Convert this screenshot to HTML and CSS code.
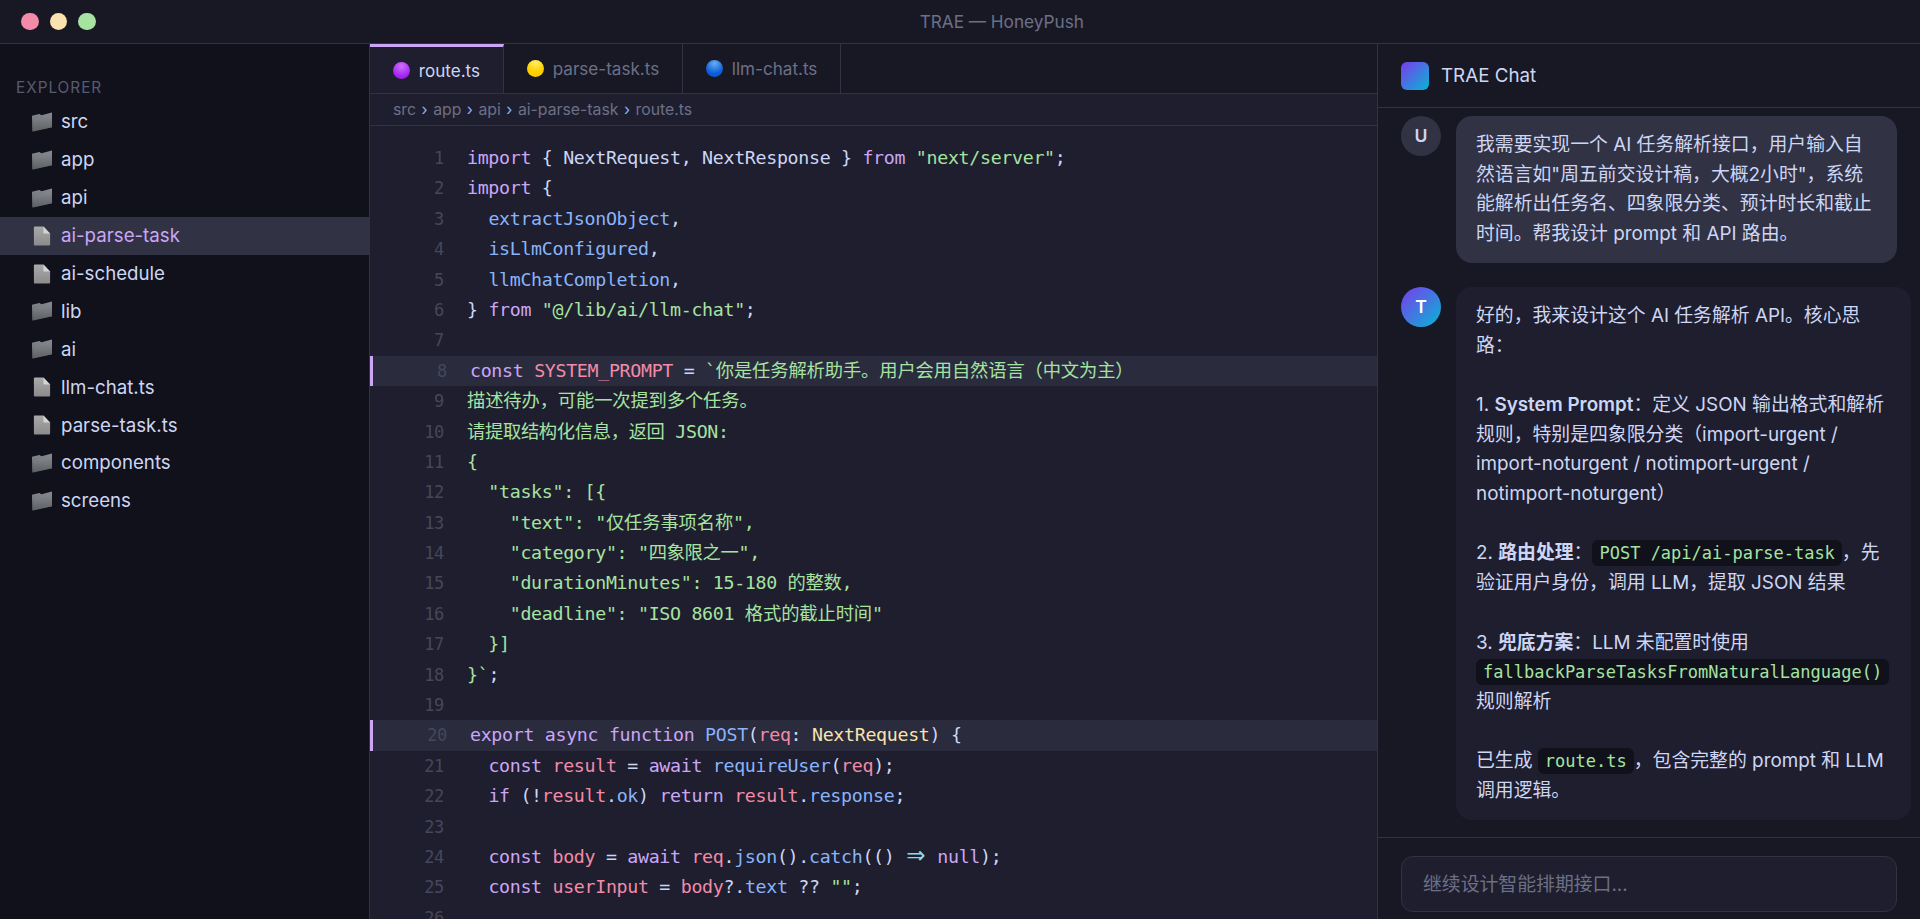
FILE: index.html
```html
<!DOCTYPE html>
<html lang="en">
<head>
    <meta charset="UTF-8">
    <title>TRAE — HoneyPush</title>
    <link rel="stylesheet" href="styles.css">
</head>
<body>
    <svg class="defs" width="0" height="0">
        <defs>
            <linearGradient id="folderBack" x1="0" y1="0" x2="0" y2="1">
                <stop offset="0" stop-color="#8a8d92"/>
                <stop offset="1" stop-color="#4a4c50"/>
            </linearGradient>
            <linearGradient id="folderFront" x1="0" y1="0" x2="0" y2="1">
                <stop offset="0" stop-color="#85888c"/>
                <stop offset="1" stop-color="#5c5f63"/>
            </linearGradient>
            <linearGradient id="filePage" x1="0" y1="0" x2="0" y2="1">
                <stop offset="0" stop-color="#a9a9a9"/>
                <stop offset="1" stop-color="#8b8b8b"/>
            </linearGradient>
            <symbol id="folder" viewBox="0 0 19 19">
                <path d="M0 3.5 L7 2 L9 3 L19 .5 V14.500 L0 18.500 Z" fill="url(#folderBack)"/>
                <path d="M1.500 6.500 L19 3 V14.500 L1 18.500 Z" fill="url(#folderFront)"/>
            </symbol>
            <symbol id="file" viewBox="0 0 19 21">
                <path d="M1 1.500 Q1 .5 2 .5 H11 L18 8 V19.500 Q18 20.500 17 20.500 H2 Q1 20.500 1 19.500 Z" fill="url(#filePage)"/>
                <path d="M11 .5 L18 8 H12 Q11 8 11 7 Z" fill="#d4d4d4"/>
            </symbol>
        </defs>
    </svg>

    <header class="titlebar">
        <div class="lights">
            <span class="light red"></span>
            <span class="light yellow"></span>
            <span class="light green"></span>
        </div>
        <div class="title">TRAE — HoneyPush</div>
    </header>

    <div class="workspace">
        <aside class="sidebar">
            <div class="sidebarTitle">EXPLORER</div>
            <div class="treeItem"><svg class="treeIcon"><use href="#folder"/></svg>src</div>
            <div class="treeItem"><svg class="treeIcon"><use href="#folder"/></svg>app</div>
            <div class="treeItem"><svg class="treeIcon"><use href="#folder"/></svg>api</div>
            <div class="treeItem active"><svg class="treeIcon"><use href="#file"/></svg>ai-parse-task</div>
            <div class="treeItem"><svg class="treeIcon"><use href="#file"/></svg>ai-schedule</div>
            <div class="treeItem"><svg class="treeIcon"><use href="#folder"/></svg>lib</div>
            <div class="treeItem"><svg class="treeIcon"><use href="#folder"/></svg>ai</div>
            <div class="treeItem"><svg class="treeIcon"><use href="#file"/></svg>llm-chat.ts</div>
            <div class="treeItem"><svg class="treeIcon"><use href="#file"/></svg>parse-task.ts</div>
            <div class="treeItem"><svg class="treeIcon"><use href="#folder"/></svg>components</div>
            <div class="treeItem"><svg class="treeIcon"><use href="#folder"/></svg>screens</div>
        </aside>

        <main class="editor">
            <div class="tabs">
                <div class="tab active"><span class="ball purple"></span>route.ts</div>
                <div class="tab"><span class="ball gold"></span>parse-task.ts</div>
                <div class="tab"><span class="ball blue"></span>llm-chat.ts</div>
            </div>
            <div class="crumbs">src<i>›</i>app<i>›</i>api<i>›</i>ai-parse-task<i>›</i>route.ts</div>
            <div class="code">
                <div class="line"><span class="num">1</span><span class="k">import</span> { NextRequest, NextResponse } <span class="k">from</span> <span class="s">"next/server"</span>;</div>
                <div class="line"><span class="num">2</span><span class="k">import</span> {</div>
                <div class="line"><span class="num">3</span>  <span class="f">extractJsonObject</span>,</div>
                <div class="line"><span class="num">4</span>  <span class="f">isLlmConfigured</span>,</div>
                <div class="line"><span class="num">5</span>  <span class="f">llmChatCompletion</span>,</div>
                <div class="line"><span class="num">6</span>} <span class="k">from</span> <span class="s">"@/lib/ai/llm-chat"</span>;</div>
                <div class="line"><span class="num">7</span></div>
                <div class="line hl"><span class="num">8</span><span class="k">const</span> <span class="v">SYSTEM_PROMPT</span> = <span class="s">`<span class="zh">你是任务解析助手。用户会用自然语言（中文为主）</span></span></div>
                <div class="line"><span class="num">9</span><span class="s zh">描述待办，可能一次提到多个任务。</span></div>
                <div class="line"><span class="num">10</span><span class="s">请提取结构化信息，返回 JSON:</span></div>
                <div class="line"><span class="num">11</span><span class="s">{</span></div>
                <div class="line"><span class="num">12</span><span class="s">  "tasks": [{</span></div>
                <div class="line"><span class="num">13</span><span class="s">    "text": "<span class="zh">仅任务事项名称</span>",</span></div>
                <div class="line"><span class="num">14</span><span class="s">    "category": "四象限之一",</span></div>
                <div class="line"><span class="num">15</span><span class="s">    "durationMinutes": 15-180 的整数,</span></div>
                <div class="line"><span class="num">16</span><span class="s">    "deadline": "ISO 8601 <span class="zh">格式的截止时间</span>"</span></div>
                <div class="line"><span class="num">17</span><span class="s">  }]</span></div>
                <div class="line"><span class="num">18</span><span class="s">}`</span>;</div>
                <div class="line"><span class="num">19</span></div>
                <div class="line hl"><span class="num">20</span><span class="k">export async function</span> <span class="f">POST</span>(<span class="v">req</span>: <span class="t">NextRequest</span>) {</div>
                <div class="line"><span class="num">21</span>  <span class="k">const</span> <span class="v">result</span> = <span class="k">await</span> <span class="f">requireUser</span>(<span class="v">req</span>);</div>
                <div class="line"><span class="num">22</span>  <span class="k">if</span> (!<span class="v">result</span>.<span class="f">ok</span>) <span class="k">return</span> <span class="v">result</span>.<span class="f">response</span>;</div>
                <div class="line"><span class="num">23</span></div>
                <div class="line"><span class="num">24</span>  <span class="k">const</span> <span class="v">body</span> = <span class="k">await</span> <span class="v">req</span>.<span class="f">json</span>().<span class="f">catch</span>(() <span class="arrow">⇒</span> <span class="k">null</span>);</div>
                <div class="line"><span class="num">25</span>  <span class="k">const</span> <span class="v">userInput</span> = <span class="v">body</span>?.<span class="f">text</span> ?? <span class="s">""</span>;</div>
                <div class="line"><span class="num">26</span></div>
            </div>
        </main>

        <section class="chat">
            <div class="chatHead"><span class="chatLogo"></span>TRAE Chat</div>
            <div class="messages">
                <div class="msg">
                    <div class="avatar">U</div>
                    <div class="bubble user">我需要实现一个 AI 任务解析接口，用户输入自然语言如"周五前交设计稿，大概2小时"，系统能解析出任务名、四象限分类、预计时长和截止时间。帮我设计 prompt 和 API 路由。</div>
                </div>
                <div class="msg">
                    <div class="avatar bot">T</div>
                    <div class="bubble">好的，我来设计这个 AI 任务解析 API。核心思路：<br><br>1. <b>System Prompt</b>：定义 JSON 输出格式和解析规则，特别是四象限分类（import-urgent / import-noturgent / notimport-urgent / notimport-noturgent）<br><br>2. <b>路由处理</b>：<code>POST /api/ai-parse-task</code>，先验证用户身份，调用 LLM，提取 JSON 结果<br><br>3. <b>兜底方案</b>：LLM 未配置时使用 <code>fallbackParseTasksFromNaturalLanguage()</code> 规则解析<br><br>已生成 <code>route.ts</code>，包含完整的 prompt 和 LLM 调用逻辑。</div>
                </div>
            </div>
            <div class="chatFoot">
                <input class="chatInput" type="text" placeholder="继续设计智能排期接口...">
            </div>
        </section>
    </div>
</body>
</html>
```
FILE: styles.css
```css
*{
    margin: 0;
    padding: 0;
    box-sizing: border-box;
}
html, body{
    height: 100%;
}
body{
    display: flex;
    flex-direction: column;
    overflow: hidden;
    background: #1e1e2e;
    color: #cdd6f4;
    font-family: Inter, "Noto Sans CJK SC", sans-serif;
}
.defs{
    position: absolute;
}

/* title bar */
.titlebar{
    display: flex;
    align-items: center;
    flex: none;
    height: 44px;
    padding: 0 12px 0 21px;
    background: #181825;
    border-bottom: 1px solid #313244;
}
.lights{
    display: flex;
    gap: 11px;
}
.light{
    width: 17.5px;
    height: 17.5px;
    border-radius: 50%;
}
.red{ background: #f38ba8; }
.yellow{ background: #f9e2af; }
.green{ background: #a6e3a1; }
.title{
    flex: 1;
    text-align: center;
    font-size: 17.2px;
    color: #6c7086;
}

.workspace{
    display: flex;
    flex: 1;
    min-height: 0;
}

/* explorer */
.sidebar{
    flex: none;
    width: 370px;
    padding-top: 34px;
    background: #11111b;
    border-right: 1px solid #313244;
}
.sidebarTitle{
    height: 20px;
    margin-bottom: 5px;
    padding-left: 16px;
    font-size: 15.3px;
    line-height: 20px;
    letter-spacing: 1px;
    color: #585b70;
}
.treeItem{
    display: flex;
    align-items: center;
    gap: 9px;
    height: 37.9px;
    padding-left: 32px;
    font-size: 18.7px;
}
.treeItem.active{
    background: #313244;
    color: #cba6f7;
}
.treeIcon{
    width: 20px;
    height: 20px;
    flex: none;
}

/* editor */
.editor{
    display: flex;
    flex-direction: column;
    flex: 1;
    min-width: 0;
}
.tabs{
    display: flex;
    flex: none;
    height: 50px;
    background: #181825;
    border-bottom: 1px solid #313244;
}
.tab{
    display: flex;
    align-items: center;
    gap: 9px;
    padding: 0 22.8px;
    font-size: 17.1px;
    color: #6c7086;
    border-right: 1px solid #313244;
}
.tab.active{
    background: #1e1e2e;
    color: #cdd6f4;
    border-top: 3px solid #cba6f7;
}
.ball{
    width: 17px;
    height: 17px;
    border-radius: 50%;
}
.purple{ background: radial-gradient(circle at 50% 25%, #d070ff, #a020f0 70%); }
.gold{ background: radial-gradient(circle at 50% 15%, #fff06a, #ffcf00 55%); }
.blue{ background: radial-gradient(circle at 50% 20%, #62aef5, #0b5ad8 65%); }
.crumbs{
    flex: none;
    height: 32px;
    padding-left: 23px;
    font-size: 15.8px;
    line-height: 31px;
    color: #6c7086;
    border-bottom: 1px solid #313244;
}
.crumbs i{
    margin: 0 5.5px;
    font-style: normal;
    color: #89b4fa;
}
.code{
    flex: 1;
    min-height: 0;
    overflow: hidden;
    padding-top: 17px;
    font-family: "DejaVu Sans Mono", "Noto Sans CJK SC", monospace;
    font-size: 18.3px;
    letter-spacing: -0.32px;
    line-height: 30.4px;
}
.line{
    height: 30.4px;
    white-space: pre;
}
.line.hl{
    background: #2a2b3d;
    border-left: 3px solid #cba6f7;
}
.num{
    display: inline-block;
    width: 74px;
    margin-right: 23px;
    text-align: right;
    font-size: 17px;
    letter-spacing: -0.3px;
    color: #45475a;
}
.k{ color: #cba6f7; }
.s{ color: #a6e3a1; }
.f{ color: #89b4fa; }
.v{ color: #f38ba8; }
.t{ color: #f9e2af; }
.zh{
    letter-spacing: -0.12px;
}
.arrow{
    display: inline-block;
    width: 21.4px;
    text-align: center;
    font-family: "DejaVu Sans", sans-serif;
    font-size: 23px;
    line-height: 0;
    letter-spacing: 0;
    color: #89dceb;
}

/* chat */
.chat{
    display: flex;
    flex-direction: column;
    flex: none;
    width: 543px;
    background: #181825;
    border-left: 1px solid #313244;
}
.chatHead{
    display: flex;
    align-items: center;
    gap: 12px;
    flex: none;
    height: 64px;
    padding-left: 23px;
    font-size: 18.8px;
    border-bottom: 1px solid #313244;
}
.chatLogo{
    width: 28px;
    height: 28px;
    border-radius: 6px;
    background: linear-gradient(135deg, #7c3aed, #06b6d4);
}
.messages{
    flex: 1;
    min-height: 0;
    overflow: hidden;
    padding: 8px 9px 0 23px;
}
.msg{
    display: flex;
    gap: 15px;
    margin-bottom: 24px;
}
.avatar{
    flex: none;
    width: 40px;
    height: 40px;
    border-radius: 50%;
    background: #313244;
    text-align: center;
    font-size: 17.6px;
    font-weight: 600;
    line-height: 40px;
}
.avatar.bot{
    background: linear-gradient(135deg, #7c3aed, #06b6d4);
    color: #fff;
}
.bubble{
    flex: 1;
    padding: 14px 20px;
    border-radius: 16px;
    background: #1e1e2e;
    font-size: 18.85px;
    line-height: 29.7px;
    overflow-wrap: anywhere;
}
.bubble.user{
    flex: none;
    width: 441px;
    background: #313244;
}
.bubble b{
    font-weight: 600;
}
.bubble code{
    padding: 3px 7px;
    border-radius: 6px;
    background: #11111b;
    color: #a6e3a1;
    font-family: "DejaVu Sans Mono", monospace;
    font-size: 17px;
    line-height: 1;
}
.chatFoot{
    flex: none;
    height: 82px;
    padding: 18px 23px 0;
    border-top: 1px solid #313244;
}
.chatInput{
    display: block;
    width: 496px;
    height: 56px;
    padding: 0 21px;
    border: 1px solid #313244;
    border-radius: 12px;
    background: #1e1e2e;
    color: #cdd6f4;
    font-family: Inter, "Noto Sans CJK SC", sans-serif;
    font-size: 18.85px;
}
.chatInput::placeholder{
    color: #6c7086;
}
```
